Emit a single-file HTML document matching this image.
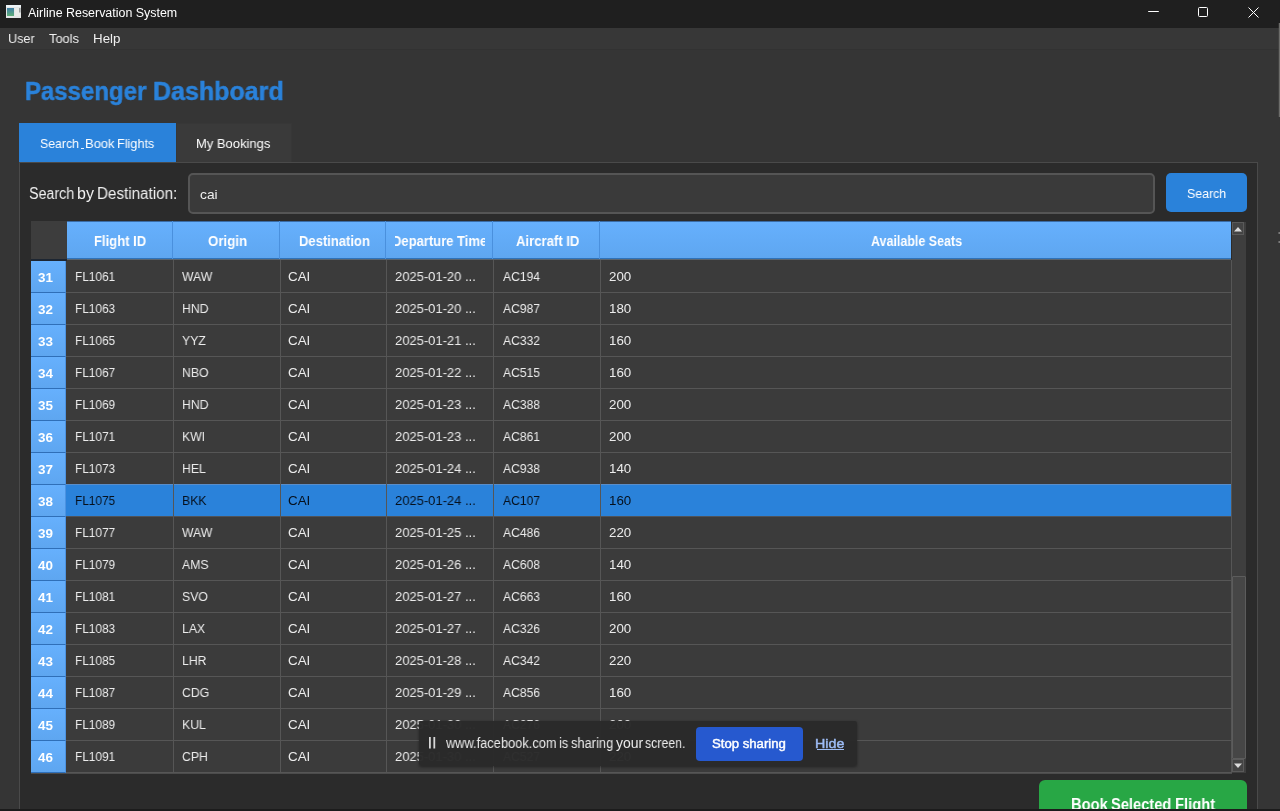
<!DOCTYPE html>
<html lang="en">
<head>
<meta charset="utf-8">
<title>Airline Reservation System</title>
<style>
*{box-sizing:border-box;margin:0;padding:0}
html,body{width:1280px;height:811px;overflow:hidden;background:#353535}
body{position:relative;font-family:"Liberation Sans","DejaVu Sans",sans-serif;color:#f0f0f0;font-size:13px}
i{font-style:normal}
.tx{will-change:transform;position:absolute;display:block;white-space:nowrap;line-height:1;transform-origin:0 0;font-weight:normal;color:#f0f0f0}
.titlebar{position:absolute;left:0;top:0;width:1280px;height:28px;background:#1f1f1f}
.ttl{color:#fff}
.appicon{position:absolute;left:6px;top:5px;width:15px;height:13px}
.winbtn{position:absolute;top:0;height:27px}
.menubar{position:absolute;left:0;top:28px;width:1280px;height:22px;background:#373737;border-bottom:1px solid #323232}
.menubar .tx{margin-top:-28px}
h1{font-size:26px;font-weight:bold}
h1 .tx{font-weight:bold;color:#2a82da;-webkit-text-stroke:.5px #2a82da}
.tab{position:absolute;top:123px;height:39px}
.tab.on{left:19px;width:157px;background:#2a82da}
.tab.off{left:176px;width:116px;background:#3a3a3a;border:1px solid #373737;border-bottom:none}
.tabt{color:#fff}
.mn{position:absolute;left:81px;top:148px;width:3px;height:1px;background:#e4f0ff}
.pane{position:absolute;left:19px;top:162px;width:1239px;height:660px;background:#2b2b2b;border:1px solid #4a4a4a}
.input{position:absolute;left:188px;top:173px;width:967px;height:41px;border:2px solid #555;border-radius:5px;background:#3a3a3a}
.btn-search{position:absolute;left:1166px;top:173px;width:81px;height:39px;border-radius:5px;background:#2a82da}
.btnt{color:#fff}
.table{position:absolute;left:0;top:0;width:1280px;height:811px;pointer-events:none}
.corner{position:absolute;left:31px;top:221px;width:36px;height:40px;background:#3d3d3d;border-bottom:2px solid #1d2632}
.hrow{position:absolute;left:67px;top:221px;width:1164px;height:40px;background:linear-gradient(#66b0fd,#5ea6f0) 0 0/100% 37px no-repeat #3b3b3b;border-top:1px solid #3a6ca6}
.hrow::after{content:"";position:absolute;left:0;top:36px;width:100%;height:2px;background:linear-gradient(#2f72b8 50%,#5a6570 50%)}
.hsep{position:absolute;top:221px;width:1px;height:38px;background:#4a90dd}
.hd{font-weight:bold;color:#fff}
.hclip{position:absolute;left:395px;top:221px;width:90px;height:38px;overflow:hidden}
.hclip .tx{margin-top:0}
.row{position:absolute;left:0;width:1280px;height:32px}
.rhb{position:absolute;left:31px;top:0;width:35px;height:32px;background:linear-gradient(#66b0fd,#5ea6f0);border-bottom:1px solid #2f6fb8;border-right:1px solid #4c93e2}
.cells{position:absolute;left:66px;top:0;width:1165px;height:32px;background:#3b3b3b;border-bottom:1px solid #565656}
.row.sel .cells{background:#2a82da;border-bottom-color:#4f5359;box-shadow:0 -1px 0 #5a8dc8}
.rh{font-weight:bold;color:#fff}
.ct{color:#ececec}
.row.sel .ct{color:#06101c}
.vsep{position:absolute;top:260px;width:1px;height:513px;background:#565656}
.tbot{position:absolute;left:31px;top:773px;width:1201px;height:1px;background:#4c4c4c}
.tedge{position:absolute;left:1231px;top:260px;width:1px;height:513px;background:#565656}
.sbar{position:absolute;left:1232px;top:222px;width:14px;height:551px;background:#3e3e3e}
.sbtn{position:absolute;left:0;width:12px;height:13px;background:#444;border:1px solid #5a5a5a}
.shandle{position:absolute;left:0;top:354px;width:14px;height:183px;background:#464646;border:1px solid #5c5c5c;border-radius:1px}
.btn-book{position:absolute;left:1039px;top:780px;width:208px;height:50px;border-radius:6px;background:#28a745}
.bookt{font-weight:bold;color:#fff}
.share{position:absolute;left:419px;top:721px;width:438px;height:45px;background:rgba(42,42,42,.975);border-radius:2px;box-shadow:0 1px 3px rgba(0,0,0,.4)}
.grip{position:absolute;left:428.8px;top:737.3px;width:7px;height:11.5px}
.stopb{position:absolute;left:695.5px;top:726.5px;width:107.5px;height:34px;border-radius:4px;background:#2659cf}
.stopt{color:#fff;-webkit-text-stroke:.45px #fff}
.hidet{color:#9dbcf5;-webkit-text-stroke:.45px #9dbcf5}
.hideu{position:absolute;left:816.5px;top:749px;width:27.5px;height:1px;background:#9dbcf5}
.sht{color:#eaeaea}
.botband{position:absolute;left:0;top:809px;width:1280px;height:2px;background:#1c1c1c}
.redge{position:absolute;left:1279px;top:23px;width:1px;height:94px;background:#6c6c6a;box-shadow:-1px 0 0 rgba(108,108,106,.22)}
.rdot{position:absolute;left:1278px;width:2px;height:2px;background:linear-gradient(90deg,rgba(150,150,150,.25),#8a8a8a)}
</style>
</head>
<body>
<header class="titlebar">
<svg class="appicon" viewBox="0 0 15 13"><defs><linearGradient id="ig" x1="0" y1="0" x2="0" y2="1"><stop offset="0" stop-color="#3f7ea6"/><stop offset="1" stop-color="#5fae78"/></linearGradient></defs><rect x="0" y="0" width="15" height="13" fill="#e4e6e6"/><rect x="0" y="0" width="15" height="2" fill="#eef4f8"/><rect x="1" y="3" width="7" height="8" fill="url(#ig)"/><rect x="9" y="3" width="5" height="8" fill="#e9ece9"/><rect x="13" y="3" width="1.6" height="4.5" fill="#9aa0a0"/></svg>
<svg class="winbtn" style="left:1142px" width="24" height="27" viewBox="0 0 24 27"><path d="M6.2 11.5h10.6" stroke="#fff" stroke-width="1" fill="none"/></svg>
<svg class="winbtn" style="left:1191px" width="24" height="27" viewBox="0 0 24 27"><rect x="7.5" y="7.5" width="9" height="9" rx="1" stroke="#fff" stroke-width="1" fill="none"/></svg>
<svg class="winbtn" style="left:1241px" width="24" height="27" viewBox="0 0 24 27"><path d="M7.5 7.5l10 10M17.5 7.5l-10 10" stroke="#fff" stroke-width="1" fill="none"/></svg>
<span class="tx ttl" id="t_title" style="left:28.00px;top:7.00px;font-size:12px;transform:scaleX(1.0358);">Airline Reservation System</span>
</header>
<nav class="menubar"><span class="tx mi" id="t_m1" style="left:8.00px;top:32.00px;font-size:13.33px;transform:scaleX(0.9455);">User</span><span class="tx mi" id="t_m2" style="left:49.00px;top:32.00px;font-size:13.33px;transform:scaleX(0.9625);">Tools</span><span class="tx mi" id="t_m3" style="left:93.00px;top:32.00px;font-size:13.33px;transform:scaleX(0.9831);">Help</span></nav>
<h1><span class="tx h1" id="t_h1a" style="left:25.00px;top:78.00px;font-size:26px;transform:scaleX(0.9215);">Passenger</span> <span class="tx h1" id="t_h1b" style="left:153.00px;top:78.00px;font-size:26px;transform:scaleX(0.9620);">Dashboard</span></h1>
<div class="tab on"></div><span class="tx tabt" id="t_tab1a" style="left:40.00px;top:137.00px;font-size:13.33px;transform:scaleX(0.9222);">Search</span> <i class="mn"></i><span class="tx tabt" id="t_tab1b" style="left:85.00px;top:137.00px;font-size:13.33px;transform:scaleX(0.9705);">Book</span> <span class="tx tabt" id="t_tab1c" style="left:117.00px;top:137.00px;font-size:13.33px;transform:scaleX(0.9511);">Flights</span>
<div class="tab off"></div><span class="tx tabt" id="t_tab2" style="left:196.00px;top:137.00px;font-size:13.33px;transform:scaleX(0.9742);">My Bookings</span>
<main class="pane"></main>
<label><span class="tx lbl" id="t_lbla" style="left:29.00px;top:186.00px;font-size:16px;transform:scaleX(0.8919);">Search</span> <span class="tx lbl" id="t_lblb" style="left:77.00px;top:186.00px;font-size:16px;transform:scaleX(0.9800);">by</span> <span class="tx lbl" id="t_lblc" style="left:97.00px;top:186.00px;font-size:16px;transform:scaleX(0.9499);">Destination:</span></label>
<div class="input"></div><span class="tx inpt" id="t_inp" style="left:200.00px;top:188.00px;font-size:13.33px;transform:scaleX(1.0317);">cai</span>
<div class="btn-search"></div><span class="tx btnt" id="t_sbtn" style="left:1187.00px;top:187.00px;font-size:13px;transform:scaleX(0.9482);">Search</span>
<section class="table">
<div class="corner"></div>
<div class="hrow"></div>
<i class="hsep" style="left:172px"></i><i class="hsep" style="left:279px"></i><i class="hsep" style="left:385px"></i><i class="hsep" style="left:492px"></i><i class="hsep" style="left:599px"></i>
<span class="tx hd" id="t_hd1" style="left:94.00px;top:234.00px;font-size:14px;transform:scaleX(0.9302);">Flight ID</span><span class="tx hd" id="t_hd2" style="left:208.00px;top:234.00px;font-size:14px;transform:scaleX(0.9480);">Origin</span><span class="tx hd" id="t_hd3" style="left:299.00px;top:234.00px;font-size:14px;transform:scaleX(0.9299);">Destination</span><span class="tx hd" id="t_hd5" style="left:516.00px;top:234.00px;font-size:14px;transform:scaleX(0.9361);">Aircraft ID</span><span class="tx hd" id="t_hd6" style="left:871.00px;top:234.00px;font-size:14px;transform:scaleX(0.8906);">Available Seats</span><div class="hclip"><span class="tx hd" id="t_hd4" style="left:-2.59px;top:13.00px;font-size:14px;transform:scaleX(0.9290);">Departure Time</span></div>
<div class="row" style="top:261px"><div class="rhb"></div><div class="cells"></div><span class="tx rh" id="t_rh" style="left:38.00px;top:10.00px;font-size:13.33px;transform:scaleX(1.0075);">31</span><span class="tx ct" id="t_c1" style="left:75.00px;top:9.00px;font-size:13.33px;transform:scaleX(0.8877);">FL1061</span><span class="tx ct" id="t_c2" style="left:182.00px;top:9.00px;font-size:13.33px;transform:scaleX(0.9179);">WAW</span><span class="tx ct" id="t_c3" style="left:288.00px;top:9.00px;font-size:13.33px;transform:scaleX(1.0028);">CAI</span><span class="tx ct" id="t_c4" style="left:395.00px;top:9.00px;font-size:13.33px;transform:scaleX(0.9739);">2025-01-20 ...</span><span class="tx ct" id="t_c5" style="left:503.00px;top:9.00px;font-size:13.33px;transform:scaleX(0.9093);">AC194</span><span class="tx ct" id="t_c6" style="left:609.00px;top:9.00px;font-size:13.33px;transform:scaleX(0.9945);">200</span></div>
<div class="row" style="top:293px"><div class="rhb"></div><div class="cells"></div><span class="tx rh" style="left:38.00px;top:10.00px;font-size:13.33px;transform:scaleX(1.0075);">32</span><span class="tx ct" style="left:75.00px;top:9.00px;font-size:13.33px;transform:scaleX(0.8877);">FL1063</span><span class="tx ct" style="left:182.00px;top:9.00px;font-size:13.33px;transform:scaleX(0.9179);">HND</span><span class="tx ct" style="left:288.00px;top:9.00px;font-size:13.33px;transform:scaleX(1.0028);">CAI</span><span class="tx ct" style="left:395.00px;top:9.00px;font-size:13.33px;transform:scaleX(0.9739);">2025-01-20 ...</span><span class="tx ct" style="left:503.00px;top:9.00px;font-size:13.33px;transform:scaleX(0.9093);">AC987</span><span class="tx ct" style="left:609.00px;top:9.00px;font-size:13.33px;transform:scaleX(0.9945);">180</span></div>
<div class="row" style="top:325px"><div class="rhb"></div><div class="cells"></div><span class="tx rh" style="left:38.00px;top:10.00px;font-size:13.33px;transform:scaleX(1.0075);">33</span><span class="tx ct" style="left:75.00px;top:9.00px;font-size:13.33px;transform:scaleX(0.8877);">FL1065</span><span class="tx ct" style="left:182.00px;top:9.00px;font-size:13.33px;transform:scaleX(0.9179);">YYZ</span><span class="tx ct" style="left:288.00px;top:9.00px;font-size:13.33px;transform:scaleX(1.0028);">CAI</span><span class="tx ct" style="left:395.00px;top:9.00px;font-size:13.33px;transform:scaleX(0.9739);">2025-01-21 ...</span><span class="tx ct" style="left:503.00px;top:9.00px;font-size:13.33px;transform:scaleX(0.9093);">AC332</span><span class="tx ct" style="left:609.00px;top:9.00px;font-size:13.33px;transform:scaleX(0.9945);">160</span></div>
<div class="row" style="top:357px"><div class="rhb"></div><div class="cells"></div><span class="tx rh" style="left:38.00px;top:10.00px;font-size:13.33px;transform:scaleX(1.0075);">34</span><span class="tx ct" style="left:75.00px;top:9.00px;font-size:13.33px;transform:scaleX(0.8877);">FL1067</span><span class="tx ct" style="left:182.00px;top:9.00px;font-size:13.33px;transform:scaleX(0.9179);">NBO</span><span class="tx ct" style="left:288.00px;top:9.00px;font-size:13.33px;transform:scaleX(1.0028);">CAI</span><span class="tx ct" style="left:395.00px;top:9.00px;font-size:13.33px;transform:scaleX(0.9739);">2025-01-22 ...</span><span class="tx ct" style="left:503.00px;top:9.00px;font-size:13.33px;transform:scaleX(0.9093);">AC515</span><span class="tx ct" style="left:609.00px;top:9.00px;font-size:13.33px;transform:scaleX(0.9945);">160</span></div>
<div class="row" style="top:389px"><div class="rhb"></div><div class="cells"></div><span class="tx rh" style="left:38.00px;top:10.00px;font-size:13.33px;transform:scaleX(1.0075);">35</span><span class="tx ct" style="left:75.00px;top:9.00px;font-size:13.33px;transform:scaleX(0.8877);">FL1069</span><span class="tx ct" style="left:182.00px;top:9.00px;font-size:13.33px;transform:scaleX(0.9179);">HND</span><span class="tx ct" style="left:288.00px;top:9.00px;font-size:13.33px;transform:scaleX(1.0028);">CAI</span><span class="tx ct" style="left:395.00px;top:9.00px;font-size:13.33px;transform:scaleX(0.9739);">2025-01-23 ...</span><span class="tx ct" style="left:503.00px;top:9.00px;font-size:13.33px;transform:scaleX(0.9093);">AC388</span><span class="tx ct" style="left:609.00px;top:9.00px;font-size:13.33px;transform:scaleX(0.9945);">200</span></div>
<div class="row" style="top:421px"><div class="rhb"></div><div class="cells"></div><span class="tx rh" style="left:38.00px;top:10.00px;font-size:13.33px;transform:scaleX(1.0075);">36</span><span class="tx ct" style="left:75.00px;top:9.00px;font-size:13.33px;transform:scaleX(0.8877);">FL1071</span><span class="tx ct" style="left:182.00px;top:9.00px;font-size:13.33px;transform:scaleX(0.9179);">KWI</span><span class="tx ct" style="left:288.00px;top:9.00px;font-size:13.33px;transform:scaleX(1.0028);">CAI</span><span class="tx ct" style="left:395.00px;top:9.00px;font-size:13.33px;transform:scaleX(0.9739);">2025-01-23 ...</span><span class="tx ct" style="left:503.00px;top:9.00px;font-size:13.33px;transform:scaleX(0.9093);">AC861</span><span class="tx ct" style="left:609.00px;top:9.00px;font-size:13.33px;transform:scaleX(0.9945);">200</span></div>
<div class="row" style="top:453px"><div class="rhb"></div><div class="cells"></div><span class="tx rh" style="left:38.00px;top:10.00px;font-size:13.33px;transform:scaleX(1.0075);">37</span><span class="tx ct" style="left:75.00px;top:9.00px;font-size:13.33px;transform:scaleX(0.8877);">FL1073</span><span class="tx ct" style="left:182.00px;top:9.00px;font-size:13.33px;transform:scaleX(0.9179);">HEL</span><span class="tx ct" style="left:288.00px;top:9.00px;font-size:13.33px;transform:scaleX(1.0028);">CAI</span><span class="tx ct" style="left:395.00px;top:9.00px;font-size:13.33px;transform:scaleX(0.9739);">2025-01-24 ...</span><span class="tx ct" style="left:503.00px;top:9.00px;font-size:13.33px;transform:scaleX(0.9093);">AC938</span><span class="tx ct" style="left:609.00px;top:9.00px;font-size:13.33px;transform:scaleX(0.9945);">140</span></div>
<div class="row sel" style="top:485px"><div class="rhb"></div><div class="cells"></div><span class="tx rh" style="left:38.00px;top:10.00px;font-size:13.33px;transform:scaleX(1.0075);">38</span><span class="tx ct" style="left:75.00px;top:9.00px;font-size:13.33px;transform:scaleX(0.8877);">FL1075</span><span class="tx ct" style="left:182.00px;top:9.00px;font-size:13.33px;transform:scaleX(0.9179);">BKK</span><span class="tx ct" style="left:288.00px;top:9.00px;font-size:13.33px;transform:scaleX(1.0028);">CAI</span><span class="tx ct" style="left:395.00px;top:9.00px;font-size:13.33px;transform:scaleX(0.9739);">2025-01-24 ...</span><span class="tx ct" style="left:503.00px;top:9.00px;font-size:13.33px;transform:scaleX(0.9093);">AC107</span><span class="tx ct" style="left:609.00px;top:9.00px;font-size:13.33px;transform:scaleX(0.9945);">160</span></div>
<div class="row" style="top:517px"><div class="rhb"></div><div class="cells"></div><span class="tx rh" style="left:38.00px;top:10.00px;font-size:13.33px;transform:scaleX(1.0075);">39</span><span class="tx ct" style="left:75.00px;top:9.00px;font-size:13.33px;transform:scaleX(0.8877);">FL1077</span><span class="tx ct" style="left:182.00px;top:9.00px;font-size:13.33px;transform:scaleX(0.9179);">WAW</span><span class="tx ct" style="left:288.00px;top:9.00px;font-size:13.33px;transform:scaleX(1.0028);">CAI</span><span class="tx ct" style="left:395.00px;top:9.00px;font-size:13.33px;transform:scaleX(0.9739);">2025-01-25 ...</span><span class="tx ct" style="left:503.00px;top:9.00px;font-size:13.33px;transform:scaleX(0.9093);">AC486</span><span class="tx ct" style="left:609.00px;top:9.00px;font-size:13.33px;transform:scaleX(0.9945);">220</span></div>
<div class="row" style="top:549px"><div class="rhb"></div><div class="cells"></div><span class="tx rh" style="left:38.00px;top:10.00px;font-size:13.33px;transform:scaleX(1.0075);">40</span><span class="tx ct" style="left:75.00px;top:9.00px;font-size:13.33px;transform:scaleX(0.8877);">FL1079</span><span class="tx ct" style="left:182.00px;top:9.00px;font-size:13.33px;transform:scaleX(0.9179);">AMS</span><span class="tx ct" style="left:288.00px;top:9.00px;font-size:13.33px;transform:scaleX(1.0028);">CAI</span><span class="tx ct" style="left:395.00px;top:9.00px;font-size:13.33px;transform:scaleX(0.9739);">2025-01-26 ...</span><span class="tx ct" style="left:503.00px;top:9.00px;font-size:13.33px;transform:scaleX(0.9093);">AC608</span><span class="tx ct" style="left:609.00px;top:9.00px;font-size:13.33px;transform:scaleX(0.9945);">140</span></div>
<div class="row" style="top:581px"><div class="rhb"></div><div class="cells"></div><span class="tx rh" style="left:38.00px;top:10.00px;font-size:13.33px;transform:scaleX(1.0075);">41</span><span class="tx ct" style="left:75.00px;top:9.00px;font-size:13.33px;transform:scaleX(0.8877);">FL1081</span><span class="tx ct" style="left:182.00px;top:9.00px;font-size:13.33px;transform:scaleX(0.9179);">SVO</span><span class="tx ct" style="left:288.00px;top:9.00px;font-size:13.33px;transform:scaleX(1.0028);">CAI</span><span class="tx ct" style="left:395.00px;top:9.00px;font-size:13.33px;transform:scaleX(0.9739);">2025-01-27 ...</span><span class="tx ct" style="left:503.00px;top:9.00px;font-size:13.33px;transform:scaleX(0.9093);">AC663</span><span class="tx ct" style="left:609.00px;top:9.00px;font-size:13.33px;transform:scaleX(0.9945);">160</span></div>
<div class="row" style="top:613px"><div class="rhb"></div><div class="cells"></div><span class="tx rh" style="left:38.00px;top:10.00px;font-size:13.33px;transform:scaleX(1.0075);">42</span><span class="tx ct" style="left:75.00px;top:9.00px;font-size:13.33px;transform:scaleX(0.8877);">FL1083</span><span class="tx ct" style="left:182.00px;top:9.00px;font-size:13.33px;transform:scaleX(0.9179);">LAX</span><span class="tx ct" style="left:288.00px;top:9.00px;font-size:13.33px;transform:scaleX(1.0028);">CAI</span><span class="tx ct" style="left:395.00px;top:9.00px;font-size:13.33px;transform:scaleX(0.9739);">2025-01-27 ...</span><span class="tx ct" style="left:503.00px;top:9.00px;font-size:13.33px;transform:scaleX(0.9093);">AC326</span><span class="tx ct" style="left:609.00px;top:9.00px;font-size:13.33px;transform:scaleX(0.9945);">200</span></div>
<div class="row" style="top:645px"><div class="rhb"></div><div class="cells"></div><span class="tx rh" style="left:38.00px;top:10.00px;font-size:13.33px;transform:scaleX(1.0075);">43</span><span class="tx ct" style="left:75.00px;top:9.00px;font-size:13.33px;transform:scaleX(0.8877);">FL1085</span><span class="tx ct" style="left:182.00px;top:9.00px;font-size:13.33px;transform:scaleX(0.9179);">LHR</span><span class="tx ct" style="left:288.00px;top:9.00px;font-size:13.33px;transform:scaleX(1.0028);">CAI</span><span class="tx ct" style="left:395.00px;top:9.00px;font-size:13.33px;transform:scaleX(0.9739);">2025-01-28 ...</span><span class="tx ct" style="left:503.00px;top:9.00px;font-size:13.33px;transform:scaleX(0.9093);">AC342</span><span class="tx ct" style="left:609.00px;top:9.00px;font-size:13.33px;transform:scaleX(0.9945);">220</span></div>
<div class="row" style="top:677px"><div class="rhb"></div><div class="cells"></div><span class="tx rh" style="left:38.00px;top:10.00px;font-size:13.33px;transform:scaleX(1.0075);">44</span><span class="tx ct" style="left:75.00px;top:9.00px;font-size:13.33px;transform:scaleX(0.8877);">FL1087</span><span class="tx ct" style="left:182.00px;top:9.00px;font-size:13.33px;transform:scaleX(0.9179);">CDG</span><span class="tx ct" style="left:288.00px;top:9.00px;font-size:13.33px;transform:scaleX(1.0028);">CAI</span><span class="tx ct" style="left:395.00px;top:9.00px;font-size:13.33px;transform:scaleX(0.9739);">2025-01-29 ...</span><span class="tx ct" style="left:503.00px;top:9.00px;font-size:13.33px;transform:scaleX(0.9093);">AC856</span><span class="tx ct" style="left:609.00px;top:9.00px;font-size:13.33px;transform:scaleX(0.9945);">160</span></div>
<div class="row" style="top:709px"><div class="rhb"></div><div class="cells"></div><span class="tx rh" style="left:38.00px;top:10.00px;font-size:13.33px;transform:scaleX(1.0075);">45</span><span class="tx ct" style="left:75.00px;top:9.00px;font-size:13.33px;transform:scaleX(0.8877);">FL1089</span><span class="tx ct" style="left:182.00px;top:9.00px;font-size:13.33px;transform:scaleX(0.9179);">KUL</span><span class="tx ct" style="left:288.00px;top:9.00px;font-size:13.33px;transform:scaleX(1.0028);">CAI</span><span class="tx ct" style="left:395.00px;top:9.00px;font-size:13.33px;transform:scaleX(0.9739);">2025-01-30 ...</span><span class="tx ct" style="left:503.00px;top:9.00px;font-size:13.33px;transform:scaleX(0.9093);">AC276</span><span class="tx ct" style="left:609.00px;top:9.00px;font-size:13.33px;transform:scaleX(0.9945);">200</span></div>
<div class="row" style="top:741px"><div class="rhb"></div><div class="cells"></div><span class="tx rh" style="left:38.00px;top:10.00px;font-size:13.33px;transform:scaleX(1.0075);">46</span><span class="tx ct" style="left:75.00px;top:9.00px;font-size:13.33px;transform:scaleX(0.8877);">FL1091</span><span class="tx ct" style="left:182.00px;top:9.00px;font-size:13.33px;transform:scaleX(0.9179);">CPH</span><span class="tx ct" style="left:288.00px;top:9.00px;font-size:13.33px;transform:scaleX(1.0028);">CAI</span><span class="tx ct" style="left:395.00px;top:9.00px;font-size:13.33px;transform:scaleX(0.9739);">2025-01-30 ...</span><span class="tx ct" style="left:503.00px;top:9.00px;font-size:13.33px;transform:scaleX(0.9093);">AC527</span><span class="tx ct" style="left:609.00px;top:9.00px;font-size:13.33px;transform:scaleX(0.9945);">220</span></div>
<i class="vsep" style="left:173px"></i><i class="vsep" style="left:280px"></i><i class="vsep" style="left:386px"></i><i class="vsep" style="left:493px"></i><i class="vsep" style="left:600px"></i>
</section>
<i class="tedge"></i><i class="tbot"></i>
<div class="sbar"><div class="sbtn" style="top:0"><svg width="10" height="11" viewBox="0 0 10 11" style="display:block"><path d="M1 8.5L5 4l4 4.5z" fill="#dcdcdc"/></svg></div><div class="shandle"></div><div class="sbtn" style="top:537px"><svg width="10" height="11" viewBox="0 0 10 11" style="display:block"><path d="M1 3.5L5 8l4-4.5z" fill="#dcdcdc"/></svg></div></div>
<div class="btn-book"></div><span class="tx bookt" id="t_booka" style="left:1071.00px;top:797.00px;font-size:16px;transform:scaleX(0.9224);">Book</span> <span class="tx bookt" id="t_bookb" style="left:1111.00px;top:797.00px;font-size:16px;transform:scaleX(0.9160);">Selected</span> <span class="tx bookt" id="t_bookc" style="left:1175.00px;top:797.00px;font-size:16px;transform:scaleX(0.9203);">Flight</span>
<aside class="share"></aside>
<svg class="grip" viewBox="0 0 7 11.5"><rect x="0" y="0" width="1.8" height="11.5" fill="#d6d6d6"/><rect x="4.4" y="0" width="1.8" height="11.5" fill="#d6d6d6"/></svg>
<span class="tx sht" id="t_sha" style="left:446.00px;top:736.00px;font-size:14px;transform:scaleX(0.9164);">www.facebook.com</span> <span class="tx sht" id="t_shb" style="left:559.00px;top:736.00px;font-size:14px;transform:scaleX(0.9188);">is</span> <span class="tx sht" id="t_shc" style="left:571.00px;top:736.00px;font-size:14px;transform:scaleX(0.9195);">sharing</span> <span class="tx sht" id="t_shd" style="left:616.00px;top:736.00px;font-size:14px;transform:scaleX(0.9884);">your</span> <span class="tx sht" id="t_she" style="left:645.00px;top:736.00px;font-size:14px;transform:scaleX(0.8794);">screen.</span>
<div class="stopb"></div><span class="tx stopt" id="t_stop" style="left:712.00px;top:737.00px;font-size:13px;transform:scaleX(1.0116);">Stop sharing</span>
<span class="tx hidet" id="t_hide" style="left:815.00px;top:737.00px;font-size:13px;transform:scaleX(1.0959);">Hide</span><i class="hideu"></i>
<i class="botband"></i>
<i class="redge"></i><i class="rdot" style="top:232px"></i><i class="rdot" style="top:241px"></i>
</body>
</html>
